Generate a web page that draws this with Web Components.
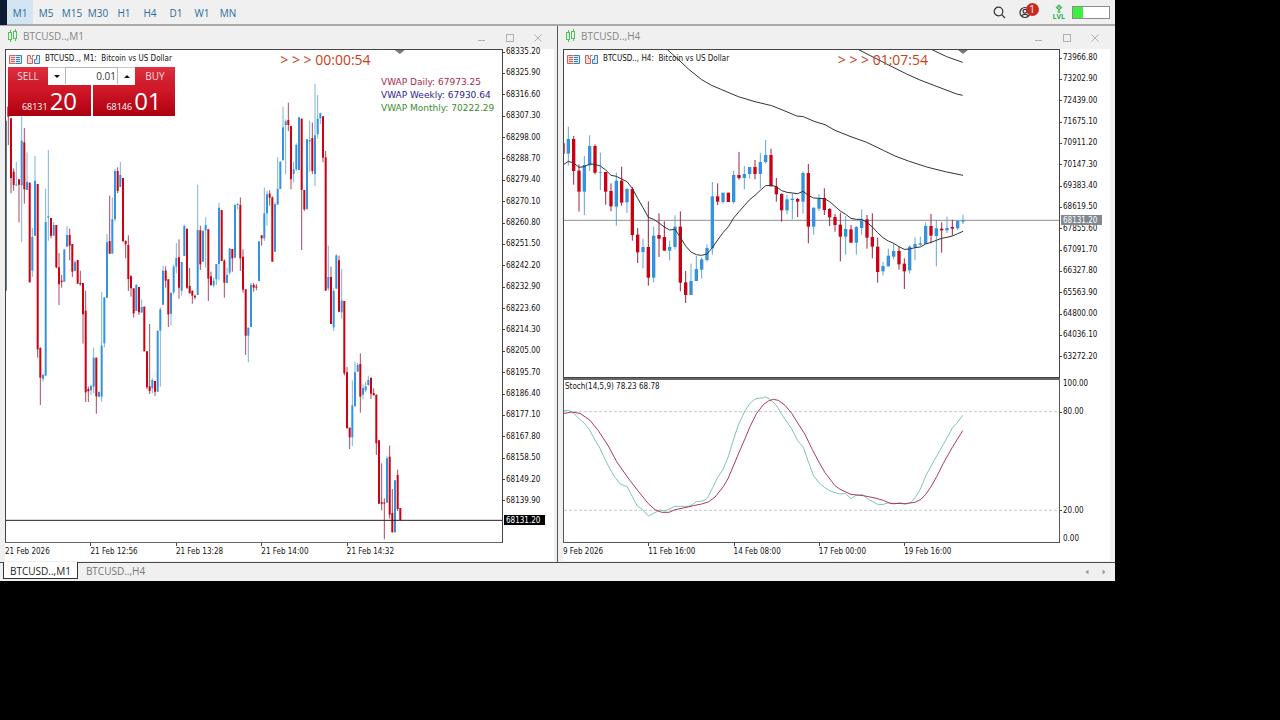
<!DOCTYPE html>
<html lang="en">
<head>
<meta charset="utf-8">
<title>BTCUSD charts</title>
<style>
  html { height: 100%; }
  body {
    margin: 0; box-sizing: border-box; min-height: 100vh; display: flex;
    padding: 0 165px 140px 0; background: #000;
    font-family: "Open Sans", "Noto Sans", sans-serif; font-size: 10px;
  }
  trade-app { flex: 1; }
</style>
</head>
<body>
<trade-app></trade-app>

<script>
const CHART_FONT = '"DejaVu Sans Condensed", "DejaVu Sans", sans-serif';

/* Candles: "u|d high bodyTop bodyBottom low", separated by ";" */
const M1 = 'd 20 20 50 135;d 55 55 234 280;d 205 215 255 272;u 186 254 257 257;d 238 238 254 367;u 50 122 256 427;d 84 127 268 311;u 157 246 270 270;d 248 248 547 547;u 384 411 512 531;u 168 242 407 407;d 252 252 748 773;d 742 744 833 915;u 820 825 836 845;u 266 366 827 827;u 150 349 353 422;d 354 354 407 415;u 366 375 407 407;d 375 375 502 505;d 459 502 553 615;d 525 542 546 563;u 448 448 545 545;u 378 405 440 440;d 386 405 437 481;d 432 432 515 531;u 481 487 513 513;d 480 480 551 551;d 512 549 553 557;d 549 549 643 731;d 572 632 877 906;d 860 867 874 906;u 855 858 871 885;u 743 773 860 880;d 773 773 889 941;u 874 876 890 890;u 576 737 890 905;u 592 592 730 742;u 402 427 593 593;d 287 423 461 461;u 292 358 461 461;u 207 213 358 365;d 202 213 273 280;u 186 225 261 261;d 234 234 423 427;d 421 423 433 475;d 406 435 537 573;d 525 529 565 590;d 565 565 640 653;u 552 555 633 633;d 561 561 637 645;u 599 621 638 638;d 620 620 754 754;d 754 754 862 868;d 672 859 873 882;u 835 840 865 880;d 843 843 875 888;u 692 692 875 875;u 622 628 692 860;u 497 512 614 614;d 499 512 542 563;d 538 538 643 681;u 578 578 641 677;u 494 500 577 583;u 429 474 500 520;d 418 472 563 596;u 486 486 572 587;u 374 378 468 468;d 386 386 563 567;d 504 558 580 580;d 572 572 587 611;d 584 587 592 598;u 254 390 585 585;d 377 391 493 510;u 392 392 485 485;u 352 375 391 503;d 388 388 536 603;d 515 529 556 556;u 533 542 556 562;u 492 492 538 555;u 308 323 492 541;d 330 330 483 483;d 478 482 548 593;u 503 525 549 549;u 445 445 518 524;d 447 447 475 515;u 314 314 473 473;u 309 312 315 328;d 292 315 475 513;d 448 470 569 578;d 568 568 707 765;u 683 683 707 787;u 549 555 681 681;d 549 555 563 575;d 552 560 563 571;u 424 424 543 543;d 406 406 415 437;u 263 340 415 423;u 272 283 340 377;d 271 281 293 317;d 289 292 485 485;u 307 313 455 455;u 172 267 314 314;u 185 185 267 267;u 20 82 181 181;u 58 64 75 223;d 8 60 75 93;d 78 78 238 268;u 185 208 222 248;u 130 135 208 212;u 52 52 210 210;d 56 56 270 450;d 270 270 328 333;u 118 118 328 328;u 62 120 124 215;d 68 114 213 222;u -48 106 222 258;u -15 56 103 116;u 38 40 55 72;d 49 49 173 187;d 153 172 572 572;u 437 531 565 572;d 500 531 672 672;u 565 573 682 693;u 463 466 566 566;d 467 481 635 635;u 507 601 637 656;d 603 603 820 826;d 801 817 985 985;d 983 983 1012 1047;u 841 916 1012 1038;u 785 817 919 919;u 789 795 815 815;d 760 792 890 938;u 853 864 884 898;u 846 859 871 876;u 827 840 855 857;d 833 833 881 897;d 865 879 886 886;d 884 884 1030 1065;d 1021 1021 1211 1211;d 1090 1206 1211 1231;d 1195 1208 1211 1318;u 1069 1075 1208 1208;d 1037 1070 1244 1256;d 1167 1239 1297 1297;u 1141 1141 1297 1297;d 1109 1125 1227 1233;d 1224 1224 1260 1260';
const H4 = 'd 355 355 386 386;u 305 342 386 422;d 333 342 438 479;d 418 437 500 560;u 393 420 500 570;u 331 363 421 438;d 358 363 443 448;u 383 441 443 495;d 441 441 500 539;d 475 498 544 559;u 443 467 545 602;d 425 467 533 542;u 488 492 532 564;d 486 492 630 647;d 609 629 682 714;u 641 666 681 730;d 529 666 758 782;u 605 632 758 772;d 565 630 641 696;d 589 636 677 677;u 647 666 677 706;u 571 605 666 673;d 559 605 773 799;d 738 772 810 834;u 716 768 810 810;u 693 732 768 768;u 697 703 734 761;u 658 669 705 710;u 471 514 670 689;d 475 514 530 540;u 503 503 531 536;d 503 503 531 531;u 438 450 531 536;d 381 450 459 464;u 423 447 459 493;u 426 426 447 461;d 405 426 447 463;u 384 411 447 491;u 345 390 411 416;d 371 390 484 484;d 459 484 508 530;d 505 507 556 590;u 510 523 556 568;u 505 521 525 583;d 519 522 530 576;u 439 444 530 566;d 417 444 605 655;u 548 548 605 629;u 507 520 551 558;d 490 519 555 570;d 549 552 577 603;d 567 576 600 620;d 563 599 635 709;u 574 612 635 689;d 600 613 653 653;u 603 606 653 689;u 553 584 609 629;d 570 583 638 671;d 565 636 665 700;d 638 665 741 773;u 711 723 739 751;u 671 692 724 724;u 655 678 695 703;d 666 678 718 734;d 700 716 739 792;u 661 665 736 746;u 637 657 666 705;u 635 655 659 663;u 592 603 657 657;d 567 603 632 655;u 584 610 633 724;d 592 611 616 683;u 575 609 616 624;d 584 606 611 632;u 585 588 610 615;u 569 586 590 597';

const drawCandles = (data, x0, step, body, wick) => data.split(';').map((row, i) => {
  const [dir, ...n] = row.split(' ');
  const [hi, top, bottom, lo] = n.map(Number);
  const x = x0 + i * step;
  const [fill, thin] = dir === 'u' ? ['#3592de', '#62a5cf'] : ['#cb0214', '#9c2540'];
  return `<path stroke="${thin}" stroke-width="${wick}" d="M${x} ${hi}V${lo}"/>` +
         `<path stroke="${fill}" stroke-width="${body}" d="M${x} ${top}V${bottom}"/>`;
}).join('');

const CHARTS = {
  M1: {
    timer: '00:00:54', tick: 79.4,
    prices: Array.from({ length: 22 }, (_, i) => (68335.2 - i * 9.3).toFixed(2)),
    times: ['21 Feb 2026', '21 Feb 12:56', '21 Feb 13:28', '21 Feb 14:00', '21 Feb 14:32'],
    box: '18 -150 1488 1476', tag: 95.4,
    svg: () => `<path stroke="#46647e" stroke-width="3" d="M19 62V572"/>` +
      drawCandles(M1, 25, 8, 6, 2.5) + `<path stroke="#2a1a20" stroke-width="3" d="M0 1261H1600"/>`
  },
  H4: {
    timer: '01:07:54', tick: 80.6,
    prices: Array.from({ length: 15 }, (_, i) => (73966.8 - i * 763.9).toFixed(2)),
    times: ['9 Feb 2026', '11 Feb 16:00', '14 Feb 08:00', '17 Feb 00:00', '19 Feb 16:00'],
    box: '27 75 1485 981', tag: 52,
    svg: () => `<path stroke="#8d9092" stroke-width="3" d="M0 586H1600"/>` +
      drawCandles(H4, 24, 16, 10, 3) +
      `<g stroke="#333" stroke-width="3" stroke-linejoin="round">
        <path d="M24 420L40 409L56 414L72 427L88 425L104 417L120 418L136 423L152 435L168 451L184 454L200 462L216 470L232 490L248 520L264 548L280 577L296 583L312 594L328 606L344 615L360 613L376 637L392 663L408 681L424 689L440 691L456 687L472 668L488 645L504 623L520 605L536 579L552 560L568 542L584 524L600 511L616 496L632 482L648 481L664 485L680 497L696 502L712 504L728 506L744 499L760 511L776 519L792 520L808 521L824 530L840 544L856 558L872 568L888 580L904 583L920 583L936 592L952 606L968 623L984 638L1000 648L1016 655L1032 665L1048 673L1064 672L1080 668L1096 666L1112 657L1128 652L1144 646L1160 640L1176 637L1192 633L1208 626L1224 619"/>
        <path d="M336 73L375 108L400 132L440 164L470 181L500 194L550 215L600 230L650 242L690 258L725 273L745 275L780 290L810 299L840 316L885 334L935 352L985 376L1020 393L1060 408L1115 426L1175 441L1224 451"/>
        <path d="M911 74L995 117L1055 147L1095 165L1155 188L1205 207L1223 211"/>
        <path d="M1131 74L1175 95L1223 112"/></g>`
  }
};

const STOCH = `<g stroke="#c8c8c8" stroke-width="3" stroke-dasharray="9 6"><path d="M27 125H1520M27 421H1520"/></g>
  <path stroke="#7cc8ae" stroke-width="3" d="M24 121L42 121L56 130L70 144L88 160L104 180L120 210L135 235L150 268L165 297L180 322L195 341L208 347L216 349L232 380L247 408L262 418L280 438L296 430L315 420L330 423L345 416L360 409L400 409L412 404L424 395L444 393L457 385L472 355L488 322L503 300L520 260L535 210L550 165L570 122L585 100L600 87L615 84L625 84L630 80L645 88L664 106L680 133L696 156L712 180L728 212L745 232L760 275L776 318L792 338L808 352L824 362L840 368L855 372L871 370L888 386L903 376L923 374L940 388L970 404L985 403L1000 398L1015 402L1035 398L1051 403L1067 398L1080 383L1096 358L1113 316L1140 267L1165 223L1192 174L1205 160L1223 136"/>
  <path stroke="#ac3c58" stroke-width="3" d="M24 131L50 126L75 130L104 150L130 182L160 228L185 275L215 318L247 360L280 401L300 419L320 427L342 427L360 419L390 413L415 407L440 402L460 396L480 381L505 350L520 324L535 288L550 252L570 206L585 170L605 130L625 104L640 93L655 88L670 91L690 106L710 130L730 162L750 193L770 235L790 273L810 308L840 347L855 358L888 373L925 377L960 384L985 391L1005 400L1050 401L1080 397L1098 388L1113 372L1128 350L1145 320L1165 280L1192 232L1223 182"/>`;

class Base extends HTMLElement {
  connectedCallback() {
    if (this.shadowRoot) return;
    this.attachShadow({ mode: 'open' }).innerHTML = this.view();
  }
}

customElements.define('trade-app', class extends Base {
  view() { return `<style>
      :host { display: flex; flex-direction: column; background: #f0f0f0; min-width: 0; }
      main { flex: 1; display: grid; grid-template-columns: 1fr 1px 1fr; border-bottom: 1px solid #4a4a4a; }
      .split { background: #555; }
    </style>
    <time-toolbar></time-toolbar>
    <main>
      <chart-window period="M1">BTCUSD..,M1
        <order-panel slot="panel"></order-panel>
        <vwap-list slot="note"></vwap-list>
      </chart-window>
      <div class="split"></div>
      <chart-window period="H4">BTCUSD..,H4
        <stoch-pane slot="sub"></stoch-pane>
      </chart-window>
    </main>
    <chart-tabs></chart-tabs>`; }
});

customElements.define('time-toolbar', class extends Base {
  view() {
    const periods = ['M1', 'M5', 'M15', 'M30', 'H1', 'H4', 'D1', 'W1', 'MN'];
    return `<style>
      :host { display: flex; height: 24px; border-bottom: 2px solid #a9a9a9; }
      .edge { width: 7px; height: 25px; background: #0c1a33; }
      nav { display: flex; flex: 1; }
      button { font: inherit; color: #2b6c99; background: none; border: 0; padding: 0; }
      nav button { width: 26px; line-height: 26px; height: 24px; white-space: nowrap; display: flex; justify-content: center; }
      nav .on { background: #d3e5f2; }
      .tools { display: flex; align-items: center; padding-right: 5px; }
      .tools button { display: flex; }
      .search { margin-right: 13px; }
      .user { position: relative; margin-right: 21px; }
      .badge { position: absolute; left: 7px; top: -3px; width: 13px; height: 13px; border-radius: 7px;
        background: #cb2a22; color: #fff; font-size: 10px; line-height: 13px; text-align: center; }
      .level { display: flex; flex-direction: column; align-items: center; color: #25b34b; margin-right: 7px; }
      .level span { font-size: 7px; line-height: 7px; font-weight: 700; }
      .meter { width: 36px; height: 11px; border: 1px solid #8c8c8c; background: #fff; }
      .meter i { display: block; width: 28%; height: 100%; background: #3fef3f; }
      svg { display: block; fill: none; }
    </style>
    <div class="edge"></div>
    <nav>${periods.map((p, i) => `<button type="button"${i ? '' : ' class="on"'}>${p}</button>`).join('')}</nav>
    <div class="tools">
      <button class="search" type="button" aria-label="Search"><svg width="13" height="13" stroke="#333" stroke-width="1.2"><circle cx="5.5" cy="5.5" r="4.3"/><path d="M8.700 8.700L12 12"/></svg></button>
      <button class="user" type="button" aria-label="Account"><svg width="13" height="13" stroke="#333" stroke-width="1.2"><circle cx="6" cy="6.5" r="5"/><circle cx="6" cy="5.2" r="1.9"/><path d="M2.400 10C4 7.800 8 7.800 9.600 10"/></svg><span class="badge">1</span></button>
      <div class="level"><svg width="8" height="9" stroke="#25b34b"><path fill="#8fdc9f" d="M4 .8L7 3.800H5.500L4 2.600L2.500 3.800H1ZM2 4L4 6.200L6 4M4 6V8.500M2.400 8H5.600"/></svg><span>LVL</span></div>
      <div class="meter"><i></i></div>
    </div>`;
  }
});

customElements.define('chart-window', class extends Base {
  view() {
    const period = this.getAttribute('period');
    const c = CHARTS[period];
    const h4 = period === 'H4';
    return `<style>
      :host { display: flex; flex-direction: column; min-width: 0; padding: 0 ${h4 ? '5px 0 5px' : '3px 0 5px'}; }
      header { display: flex; align-items: center; height: 23px; color: #858585; }
      header .logo { margin: 0 4px 3px 2px; }
      header .name { flex: 1; font-size: 10px; line-height: 14px; margin-bottom: 4px; }
      header .win { display: flex; gap: 18px; padding-right: ${h4 ? 10 : 11}px; }
      header button { padding: 0; border: 0; background: none; display: flex; }
      svg { display: block; fill: none; }
      .body { flex: 1; display: grid; grid-template: 1fr ${h4 ? '165px' : ''} 18px / 1fr ${h4 ? 50 : 51}px; background: #fff; margin-bottom: 1px;
        font: 8px/12px ${CHART_FONT}; color: #111; }
      .plot { display: grid; grid-template: minmax(0, 1fr) / minmax(0, 1fr); border: 1px solid #444; ${h4 ? '' : 'border-bottom-color: #666;'} min-height: 0; }
      .plot > * { grid-area: 1 / 1; }
      .plot svg.art { width: 100%; height: 100%; }
      .over { display: flex; flex-direction: column; }
      .caption { display: flex; align-items: center; gap: 5px; padding: 3px 0 0 3px; height: 12px; white-space: pre; }
      .timer { padding: 1px 0 0 55.3%; color: #cc4018; font: 14px/18px "Open Sans", sans-serif; }
      .marker { justify-self: start; margin-left: calc(${c.tick}% - 5px); width: 10px; height: 4px; background: #777; clip-path: polygon(0 0, 100% 0, 50% 100%); }
      .axis { position: relative; display: flex; flex-direction: column; justify-content: space-between;
        ${h4 ? 'padding: 3px 0 15px' : 'margin-top: -4px; padding: 1px 0 36px'}; }
      .axis div { display: flex; align-items: center; gap: 1px; white-space: nowrap; }
      .axis div::before { content: ""; width: 2px; height: 1px; background: #444; }
      .axis .tag { position: absolute; left: 1px; top: ${c.tag}%; width: 41px; height: 10px; line-height: 11px; box-sizing: border-box; padding-left: 2px;
        margin-top: -5px; background: ${h4 ? '#808890' : '#000'}; color: #fff; }
      .axis .tag::before { display: none; }
      .times { display: grid; grid-template-columns: repeat(4, 17.16%) 1fr; line-height: 17px; white-space: nowrap; }
      .times span { position: relative; }
      .times span + span::before { content: ""; position: absolute; top: 0; left: 0; width: 1px; height: 3px; background: #444; }
      .over .anchor { position: relative; flex: 1; }
      .anchor .note { position: absolute; left: 75.6%; top: 8px; }
      .anchor .panel { position: absolute; left: 2px; top: -1px; }
      .heading { display: grid; grid-template: 18px / 1fr; }
      .heading > * { grid-area: 1 / 1; }
      .sub { grid-column: 1 / 3; }
    </style>
    <header>
      <svg class="logo" width="12" height="14" stroke="#4cc45a"><path d="M3.500 1V3M3.500 11V13M8.500 0V2M8.500 10V12"/><rect x="1.5" y="3.5" width="3" height="7"/><rect x="6.5" y="2.5" width="3" height="7"/></svg>
      <span class="name"><slot></slot></span>
      <div class="win">
        <button type="button" aria-label="Minimise"><svg width="10" height="10" stroke="#b0b0b0"><path d="M1 7.500H8"/></svg></button>
        <button type="button" aria-label="Maximise"><svg width="10" height="10" stroke="#b0b0b0"><rect x="1.5" y="1.5" width="7" height="7"/></svg></button>
        <button type="button" aria-label="Close"><svg width="10" height="10" stroke="#b0b0b0"><path d="M1.500 1.500L8.500 8.500M8.500 1.500L1.500 8.500"/></svg></button>
      </div>
    </header>
    <div class="body">
      <div class="plot">
        <svg class="art" viewBox="${c.box}" preserveAspectRatio="none">${c.svg()}</svg>
        <div class="marker"></div>
        <div class="over">
          <div class="heading">
            <div class="caption">
              <svg width="13" height="11"><path stroke="#d0605c" fill="#f6dcda" d="M6.500 1.500H.5V9.500H6.500"/><path stroke="#3b82b5" fill="#d6e8f4" d="M6.500 1.500H12.500V9.500H6.500"/><path stroke="#d0605c" d="M2 3.500H6M2 5.500H6M2 7.500H6"/><path stroke="#3b82b5" d="M7 3.500H11M7 5.500H11M7 7.500H11"/></svg>
              <svg width="13" height="11"><path stroke="#d0605c" fill="#f6dcda" d="M.5 9.500V1.500H3.500V4.500H5.500V9.500Z"/><path stroke="#3b82b5" fill="#d6e8f4" d="M7.500 9.500V5.500H9.500V1.500H12.500V9.500Z"/><path stroke="#d0605c" d="M5.500 3.500V1.500H7.500"/></svg>
              <span>BTCUSD.., ${period}:  Bitcoin vs US Dollar</span>
            </div>
            <div class="timer">&gt; &gt; &gt; ${c.timer}</div>
          </div>
          <div class="anchor">
            <div class="panel"><slot name="panel"></slot></div>
            <div class="note"><slot name="note"></slot></div>
          </div>
        </div>
      </div>
      <div class="axis">${c.prices.map(p => `<div>${p}</div>`).join('')}<div class="tag">68131.20</div></div>
      ${h4 ? '<div class="sub"><slot name="sub"></slot></div>' : ''}
      <div class="times">${c.times.map(t => `<span>${t}</span>`).join('')}</div>
    </div>`;
  }
});

customElements.define('order-panel', class extends Base {
  view() { return `<style>
      :host { display: grid; grid-template: 18px 31px / 83px 82px; column-gap: 2px; width: 167px;
        font: 10px/18px "Open Sans", sans-serif; color: #fff; }
      .top { grid-column: 1 / 3; display: flex; background: #fff; }
      button { font: inherit; color: inherit; border: 0; padding: 0; }
      .side { width: 40px; background: linear-gradient(#e03040, #cb1c2c); color: #f7dcdc; }
      .step { width: 17px; background: #fff; display: flex; align-items: center; justify-content: center; border-top: 1px solid #ccc; }
      .step i { border: 3px solid transparent; border-bottom: 0; border-top-color: #111; }
      .step .up { border-top: 0; border-bottom: 3px solid #111; }
      input { width: 53px; box-sizing: border-box; height: 17px; border: 1px solid #b5b5b5; border-bottom: 0; padding: 0 1px 0 0; font: 10px "Open Sans", sans-serif; text-align: right; color: #333; border-radius: 0; }
      .price { display: flex; align-items: flex-end; justify-content: center; gap: 2px;
        background: linear-gradient(#d51b2b, #ae0010); }
      .price small { font-size: 9px; line-height: 19px; }
      .price b { font-weight: 400; font-size: 24px; line-height: 31px; }
    </style>
    <div class="top">
      <button class="side" type="button">SELL</button>
      <button class="step" type="button" aria-label="Less"><i></i></button>
      <input aria-label="Volume" value="0.01">
      <button class="step" type="button" aria-label="More"><i class="up"></i></button>
      <button class="side" type="button">BUY</button>
    </div>
    <button class="price" type="button"><small>68131</small><b>20</b></button>
    <button class="price" type="button"><small>68146</small><b>01</b></button>`; }
});

customElements.define('vwap-list', class extends Base {
  view() { return `<style>
      :host { display: grid; grid-auto-rows: 13px; font: 9px/13px "DejaVu Sans", sans-serif; white-space: nowrap; }
    </style>
    <span style="color:#a52a4c">VWAP Daily: 67973.25</span>
    <span style="color:#2d2391">VWAP Weekly: 67930.64</span>
    <span style="color:#3c8c30">VWAP Monthly: 70222.29</span>`; }
});

customElements.define('stoch-pane', class extends Base {
  view() { return `<style>
      :host { display: grid; grid-template: 165px / 1fr 50px; }
      .plot { display: grid; grid-template: minmax(0, 1fr) / minmax(0, 1fr); border: 1px solid #555; border-top: 2px solid #666; }
      .plot > * { grid-area: 1 / 1; }
      svg { width: 100%; height: 100%; display: block; fill: none; }
      .label { padding: 1px 0 0 1px; }
      .scale { display: flex; flex-direction: column; margin-bottom: -2px; }
      .scale span { display: flex; align-items: center; gap: 1px; height: 12px; }
      .scale span::before { content: ""; width: 2px; height: 1px; background: #444; }
      .scale .end::before { background: none; }
      .scale i { flex: 16; }
      .scale .mid { flex: 86; }
    </style>
    <div class="plot">
      <svg viewBox="27 30 1485 486" preserveAspectRatio="none">${STOCH}</svg>
      <div class="label">Stoch(14,5,9) 78.23 68.78</div>
    </div>
    <div class="scale">
      <span class="end">100.00</span><i></i><span>80.00</span><i class="mid"></i><span>20.00</span><i></i><span class="end">0.00</span>
    </div>`; }
});

customElements.define('chart-tabs', class extends Base {
  view() { return `<style>
      :host { display: flex; height: 18px; padding: 0 8px 0 3px; font-size: 10px; }
      button { font: inherit; color: #777; background: none; border: 0; padding: 0; height: 17px; width: 75px; line-height: 17px; }
      .on { background: #fff; color: #222; border: 1px solid #333; border-top: 0; margin-top: -1px; padding-top: 1px; }
      .arrows { margin-left: auto; display: flex; gap: 11px; align-items: center; }
      .arrows button { width: 6px; height: 8px; display: flex; }
    </style>
    <button class="on" type="button">BTCUSD..,M1</button><button type="button">BTCUSD..,H4</button>
    <div class="arrows">
      <button type="button" aria-label="Previous"><svg width="6" height="8" fill="#999"><path d="M4.500 1.500V6.500L1.500 4Z"/></svg></button>
      <button type="button" aria-label="Next"><svg width="6" height="8" fill="#999"><path d="M1.500 1.500V6.500L4.500 4Z"/></svg></button>
    </div>`; }
});
</script>
</body>
</html>
